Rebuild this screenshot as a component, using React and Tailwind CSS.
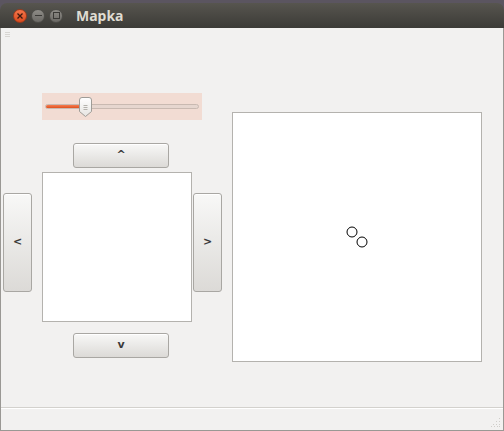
import React from "react";

function Btn({ className, label }) {
  return (
    <div
      className={
        "flex items-center justify-center rounded-[3px] border border-[#a9a7a3] bg-gradient-to-b from-[#f8f8f7] to-[#dcdad7] text-[11px] font-bold text-[#3a3a3a] shadow-[inset_0_1px_0_#ffffff] " +
        className
      }
      style={{ fontFamily: '"DejaVu Sans", sans-serif' }}
    >
      {label}
    </div>
  );
}

export default function App() {
  return (
    <div className="w-[504px] h-[431px] bg-[#5b5560] pt-[3px] overflow-hidden">
      <div className="flex h-[428px] flex-col">
        {/* Title bar */}
        <div className="flex h-[25px] items-center rounded-t-[7px] bg-gradient-to-b from-[#57554f] to-[#3c3b37] pl-[13px]">
          <div className="flex h-[14px] w-[14px] items-center justify-center rounded-full border border-[#9c3a1c] bg-gradient-to-b from-[#f4754a] to-[#d94a1c]">
            <svg width="6" height="6" viewBox="0 0 6 6">
              <path d="M0.5 0.5L5.5 5.5M5.5 0.5L0.5 5.5" stroke="#3b1a10" strokeWidth="1.3" />
            </svg>
          </div>
          <div className="ml-[4px] flex h-[14px] w-[14px] items-center justify-center rounded-full border border-[#4e4d49] bg-gradient-to-b from-[#8e8c87] to-[#6b6965]">
            <div className="h-[1.5px] w-[7px] bg-[#3a3936]" />
          </div>
          <div className="ml-[4px] flex h-[14px] w-[14px] items-center justify-center rounded-full border border-[#4e4d49] bg-gradient-to-b from-[#8e8c87] to-[#6b6965]">
            <div className="h-[7px] w-[7px] border-[1.5px] border-[#3a3936]" />
          </div>
          <div
            className="ml-[13px] text-[14px] font-bold text-[#dfdbd2]"
            style={{ fontFamily: '"Noto Sans", sans-serif' }}
          >
            Mapka
          </div>
        </div>

        {/* Content */}
        <div className="flex flex-1 flex-col border-x border-b border-[#9a9894] bg-[#f2f1f0]">
          <div className="relative flex h-[379px]">
            <div className="absolute left-[4px] top-[4px] flex flex-col gap-[1px]">
              <div className="h-[1px] w-[5px] bg-[#d8d6d2]" />
              <div className="h-[1px] w-[5px] bg-[#d8d6d2]" />
              <div className="h-[1px] w-[5px] bg-[#d8d6d2]" />
            </div>

            {/* Left column */}
            <div className="flex flex-col pl-[2px] pt-[65px]">
              <div className="relative ml-[39px] flex h-[27px] w-[160px] items-center bg-[#f2dcd3] px-[3px]">
                <div className="flex h-[5px] w-full overflow-hidden rounded-full border border-[#c9b9b1] bg-[#e6d6cf]">
                  <div className="h-full w-[38px] bg-gradient-to-b from-[#f47c4e] to-[#e0501d]" />
                </div>
                <svg
                  className="absolute left-[37px] top-[4px]"
                  width="13"
                  height="20"
                  viewBox="0 0 13 20"
                >
                  <defs>
                    <linearGradient id="th" x1="0" y1="0" x2="0" y2="1">
                      <stop offset="0" stopColor="#ffffff" />
                      <stop offset="1" stopColor="#e6e4e1" />
                    </linearGradient>
                  </defs>
                  <path
                    d="M3 0.5H10A2.5 2.5 0 0 1 12.5 3V14.5L6.5 19.5L0.5 14.5V3A2.5 2.5 0 0 1 3 0.5Z"
                    fill="url(#th)"
                    stroke="#9f9c97"
                  />
                  <path d="M4.5 8.5H8.5M4.5 10.5H8.5M4.5 12.5H8.5" stroke="#b5b2ad" strokeWidth="1" />
                </svg>
              </div>

              <Btn className="ml-[70px] mt-[23px] h-[25px] w-[96px]" label="^" />

              <div className="mt-[4px] flex items-start">
                <Btn className="mt-[21px] h-[99px] w-[29px]" label="<" />
                <div className="ml-[10px] h-[150px] w-[150px] border border-[#b4b2ae] bg-white" />
                <Btn className="ml-[1px] mt-[21px] h-[99px] w-[29px]" label=">" />
              </div>

              <Btn className="ml-[70px] mt-[11px] h-[25px] w-[96px]" label="v" />
            </div>

            {/* Canvas */}
            <div className="ml-[10px] mt-[84px] h-[250px] w-[250px] border border-[#b4b2ae] bg-white">
              <svg width="248" height="248" viewBox="0 0 248 248">
                <circle cx="119" cy="119" r="5" fill="none" stroke="#000" strokeWidth="1" />
                <circle cx="129" cy="129" r="5" fill="none" stroke="#000" strokeWidth="1" />
              </svg>
            </div>
          </div>

          {/* Status bar */}
          <div className="relative flex-1 border-t border-[#d3d1cd] shadow-[inset_0_1px_0_#ffffff]">
            <svg className="absolute bottom-[2px] right-[2px]" width="10" height="10" viewBox="0 0 10 10">
              <g fill="#d0ceca">
                <rect x="8" y="0" width="1" height="1" />
                <rect x="5" y="3" width="1" height="1" />
                <rect x="8" y="3" width="1" height="1" />
                <rect x="2" y="6" width="1" height="1" />
                <rect x="5" y="6" width="1" height="1" />
                <rect x="8" y="6" width="1" height="1" />
                <rect x="0" y="8" width="1" height="1" />
                <rect x="3" y="8" width="1" height="1" />
                <rect x="6" y="8" width="1" height="1" />
                <rect x="8" y="8" width="1" height="1" />
              </g>
            </svg>
          </div>
        </div>
      </div>
    </div>
  );
}
